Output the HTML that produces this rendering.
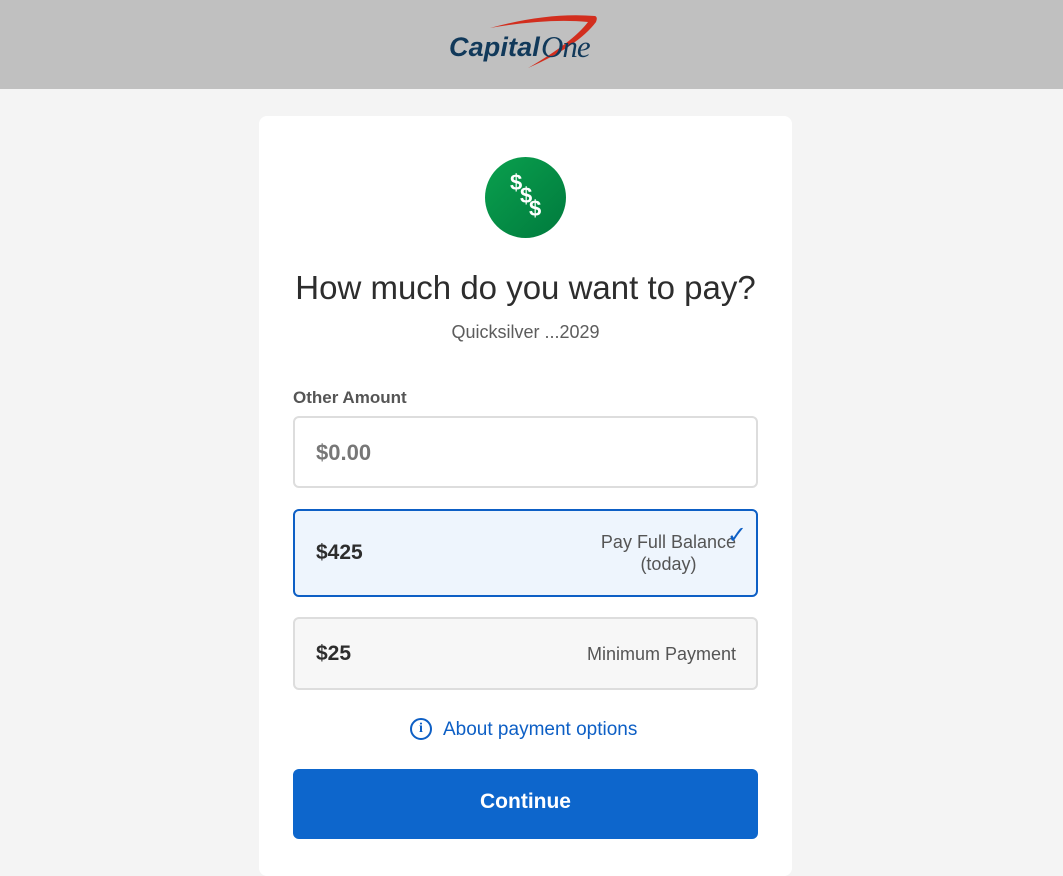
<!DOCTYPE html>
<html><head><style>
body{margin:0;width:1063px;height:828px;overflow:hidden;background:#f4f4f4;font-family:"Liberation Sans",sans-serif;position:relative}
.hdr{position:absolute;left:0;top:0;width:1063px;height:89px;background:#c0c0c0}
.card{position:absolute;left:259px;top:116px;width:533px;height:760px;background:#fff;border-radius:8px}
.abs{position:absolute}
.box{position:absolute;left:34px;width:465px;border-radius:6px;box-sizing:border-box}
</style></head><body>
<div class="hdr">
<svg class="abs" style="left:448px;top:14px" width="156" height="56" viewBox="0 0 156 56">
<path d="M42 14 Q100 -2 147 2 Q150 3 148 8 Q130 32 80 54 Q125 28 140 8 Q100 4 42 14Z" fill="#d22e1e"/>
<text x="1" y="42" font-family="Liberation Sans" font-weight="bold" font-style="italic" font-size="27" fill="#11395a" letter-spacing="-0.8" textLength="90">Capital</text>
<text x="93" y="43" font-family="Liberation Serif" font-style="italic" font-size="31" fill="#11395a" letter-spacing="-1">One</text>
</svg>
</div>
<div class="card">
<div class="abs" style="left:226px;top:41px;width:81px;height:81px;border-radius:50%;background:linear-gradient(135deg,#0aa04e,#007a3d)"></div>
<div class="abs" style="left:251px;top:60px;color:#fff;font-weight:bold;font-size:22px;line-height:13px;">$<br><span style="margin-left:10px">$</span><br><span style="margin-left:19px">$</span></div>
<div class="abs" style="left:0;width:533px;top:153px;text-align:center;font-size:33px;color:#2d2d2d">How much do you want to pay?</div>
<div class="abs" style="left:0;width:533px;top:206px;text-align:center;font-size:18px;color:#5c5c5c">Quicksilver ...2029</div>
<div class="abs" style="left:34px;top:272px;font-size:17px;color:#555;font-weight:bold">Other Amount</div>
<div class="box" style="top:300px;height:72px;border:2px solid #ddd"><span class="abs" style="left:21px;top:22px;font-size:22px;font-weight:bold;color:#777">$0.00</span></div>
<div class="box" style="top:393px;height:88px;border:2px solid #0d5fc5;background:#eef5fd">
<span class="abs" style="right:20px;top:20px;font-size:18px;color:#555;text-align:center;line-height:22px">Pay Full Balance<br>(today)</span>
<span class="abs" style="left:21px;top:30px;font-size:21px;font-weight:bold;color:#2d2d2d">$425</span>
<span class="abs" style="right:9px;top:10px;font-size:24px;color:#0d5fc5">✓</span></div>
<div class="box" style="top:501px;height:73px;border:2px solid #ddd;background:#f7f7f7">
<span class="abs" style="left:21px;top:23px;font-size:21px;font-weight:bold;color:#2d2d2d">$25</span>
<span class="abs" style="right:20px;top:25px;font-size:18px;color:#555">Minimum Payment</span></div>
<div class="abs" style="left:151px;top:602px;width:18px;height:18px;border:2px solid #0d5fc5;border-radius:50%;color:#0d5fc5;font-size:14px;font-weight:bold;text-align:center;line-height:18px;font-family:'Liberation Serif'">i</div>
<div class="abs" style="left:184px;top:603px;font-size:19px;color:#0d5fc5">About payment options</div>
<div class="box" style="top:653px;height:70px;background:#0d66cc;color:#fff;font-weight:bold;font-size:21px;text-align:center;line-height:66px">Continue</div>
</div>
</body></html>
